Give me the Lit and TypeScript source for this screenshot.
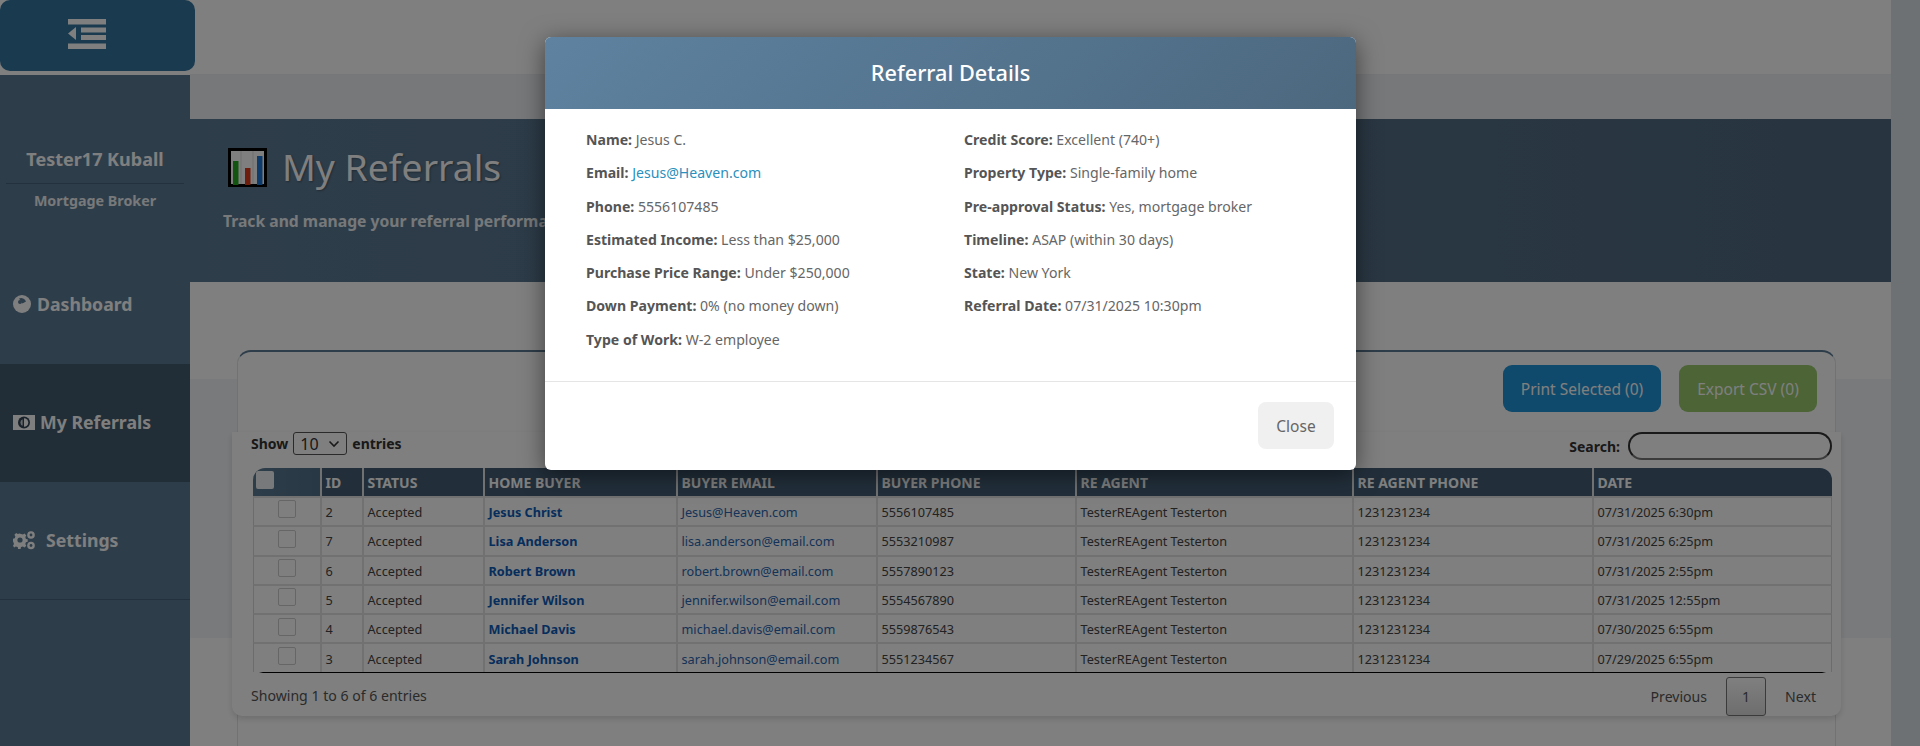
import { LitElement, html, css, svg } from "lit";
import { customElement } from "lit/decorators.js";

const rows = [
  ["2", "Jesus Christ", "Jesus@Heaven.com", "5556107485", "07/31/2025 6:30pm"],
  ["7", "Lisa Anderson", "lisa.anderson@email.com", "5553210987", "07/31/2025 6:25pm"],
  ["6", "Robert Brown", "robert.brown@email.com", "5557890123", "07/31/2025 2:55pm"],
  ["5", "Jennifer Wilson", "jennifer.wilson@email.com", "5554567890", "07/31/2025 12:55pm"],
  ["4", "Michael Davis", "michael.davis@email.com", "5559876543", "07/30/2025 6:55pm"],
  ["3", "Sarah Johnson", "sarah.johnson@email.com", "5551234567", "07/29/2025 6:55pm"],
];
const heads = ["ID", "Status", "Home Buyer", "Buyer Email", "Buyer Phone", "RE Agent", "RE Agent Phone", "Date"];
const widths = [69, 42, 121, 193, 200, 199, 277, 240, 238];

const left: [string, unknown][] = [
  ["Name:", "Jesus C."],
  ["Email:", html`<a class="mail">Jesus@Heaven.com</a>`],
  ["Phone:", "5556107485"],
  ["Estimated Income:", "Less than $25,000"],
  ["Purchase Price Range:", "Under $250,000"],
  ["Down Payment:", "0% (no money down)"],
  ["Type of Work:", "W-2 employee"],
];
const right: [string, unknown][] = [
  ["Credit Score:", "Excellent (740+)"],
  ["Property Type:", "Single-family home"],
  ["Pre-approval Status:", "Yes, mortgage broker"],
  ["Timeline:", "ASAP (within 30 days)"],
  ["State:", "New York"],
  ["Referral Date:", "07/31/2025 10:30pm"],
];

const menuIcon = svg`<svg class="menu-icon" viewBox="0 0 38 30" fill="#fff"><rect x="0" y="0" width="38" height="5.5"/><rect x="13" y="8.5" width="25" height="5"/><rect x="13" y="16" width="25" height="5"/><rect x="0" y="24.5" width="38" height="5.5"/><path d="M8 8v13L0 14.5z"/></svg>`;
const gauge = svg`<svg class="ico" width="18" height="18" viewBox="0 0 18 18"><circle cx="9" cy="9" r="9" fill="#fff"/><path d="M6 3.5 L9.5 8.5 L13 6.5 A5 5 0 0 0 6 3.5z" fill="#5c7b94"/><circle cx="7" cy="7" r="2" fill="#5c7b94"/></svg>`;
const money = svg`<svg class="ico" width="22" height="15" viewBox="0 0 22 15"><rect width="22" height="15" fill="#fff"/><circle cx="11" cy="7.5" r="6" fill="#344656"/><path d="M11 3.200a4.300 4.300 0 0 1 0 8.600z" fill="#fff"/><path d="M9.600 4.200a3.600 3.600 0 0 0 0 6.600z" fill="#fff" opacity=".75"/></svg>`;
const cogs = svg`<svg class="ico" width="22" height="20" viewBox="0 0 22 20" fill="#fff"><path d="M8 4l2 .6 1.500-1 1.800 1.800-1 1.600.6 1.900 1.800.4v2.500l-1.800.4-.6 1.900 1 1.600-1.800 1.800-1.600-1-1.900.6-.4 1.800H5.100l-.4-1.800-1.900-.6-1.600 1-1.200-1.800 1-1.600-.6-1.900L0 11.200V8.700l1.800-.4.6-1.900-1-1.600L3.200 3l1.600 1 1.900-.6z"/><circle cx="7" cy="10" r="2.600" fill="#5c7b94"/><circle cx="18" cy="5" r="3.800"/><circle cx="18" cy="5" r="1.400" fill="#5c7b94"/><circle cx="18" cy="15.500" r="3.800"/><circle cx="18" cy="15.500" r="1.400" fill="#5c7b94"/></svg>`;
const chart = svg`<svg class="chart" viewBox="0 0 39 39"><rect x="1.500" y="1.500" width="36" height="36" fill="#fff" stroke="#000" stroke-width="3"/><path d="M13 3v33M25 3v33" stroke="#ddd" stroke-width="1"/><rect x="5" y="13" width="5.500" height="24" fill="#22aa22"/><rect x="17" y="20" width="5.500" height="17" fill="#dd3b1a"/><rect x="29" y="8" width="5.500" height="29" fill="#1a78d8"/></svg>`;

@customElement("app-root")
export class AppRoot extends LitElement {
  static styles = css`
    :host { display: block; width: 1920px; height: 746px; overflow: hidden; position: relative; background: #fff;
      font-family: "Noto Sans", "Open Sans", sans-serif; color: #444; }
    .page { display: grid; grid-template-columns: 190px 1fr 29px; height: 746px; }
    .toggle { position: absolute; left: 0; top: 0; width: 195px; height: 71px; border-radius: 10px; background: #34749f; display: flex; padding: 19px 0 0 68px; box-sizing: border-box; }
    .menu-icon { width: 38px; height: 30px; }
    .side { margin-top: 75px; background: #5c7b94; color: #fff; font-weight: 700; display: flex; flex-direction: column; }
    .profile { height: 171px; box-sizing: border-box; padding-top: 71px; text-align: center; }
    .name { font-size: 18px; line-height: 26px; padding-bottom: 11px; margin: 0 6px; border-bottom: 1px solid #45627a; }
    .role { font-size: 14.300px; line-height: 20px; margin-top: 7px; opacity: .9; }
    .nav { height: 118px; box-sizing: border-box; display: flex; align-items: center; padding: 0 0 2px 13px; font-size: 17.700px; gap: 6px; }
    .nav.active { background: #425a6e; gap: 5px; }
    .nav.last { border-bottom: 1px solid #45627a; gap: 11px; }
    .ico { flex: none; }
    .main { display: flex; flex-direction: column; min-width: 0; background: #eef1f4; }
    .top { height: 74px; background: #fff; border-bottom: 1px solid #eceef0; margin-bottom: 44px; flex: none; }
    .banner { height: 163px; background: linear-gradient(90deg, #5c7b94, #506a80); flex: none; box-sizing: border-box; padding: 27px 34px 0; color: #fff; }
    .title { display: flex; align-items: center; gap: 15px; margin-left: 4px; }
    .chart { width: 39px; height: 39px; margin-top: 2px; }
    h1 { margin: 0; font-size: 37.300px; line-height: 40px; font-weight: 400; text-shadow: 1px 1px 2px rgba(0,0,0,.3); }
    .sub { font-size: 15.700px; line-height: 22px; font-weight: 700; margin: 23px 0 0 -1px; white-space: nowrap; opacity: .9; }
    .content { flex: 1; background: linear-gradient(#fff 97px, #f2f5f8 97px, #f2f5f8 356px, #fff 356px); padding: 68px 55px 0 47px; min-height: 0; }
    .card { height: 100%; box-sizing: border-box; border: 1px solid #e2e4e6; border-top: 2px solid #5c7b94; border-bottom: 0; border-radius: 14px 14px 0 0; padding-top: 13px; background: #fff; }
    .tools { display: flex; justify-content: flex-end; gap: 18px; padding-right: 18px; height: 47px; }
    .btn { border-radius: 9px; color: #fff; font-size: 15.500px; display: flex; align-items: center; justify-content: center; }
    .print { width: 158px; background: #1f94d8; }
    .csv { width: 138px; background: #98c86c; }
    .panel { margin: 20px -6px 0; height: 284px; box-sizing: border-box; border-radius: 0 0 10px 10px; background: #fff; box-shadow: 0 3px 6px rgba(0,0,0,.14); padding: 0 9px 0 19px; color: #444; }
    .lenrow { display: flex; justify-content: space-between; height: 28px; font-size: 14px; font-weight: 700; align-items: center; color: #333; }
    .show { display: flex; align-items: center; gap: 5px; margin-top: -5px; }
    .sel { width: 54px; height: 23px; box-sizing: border-box; border: 1px solid #555; border-radius: 3px; font-weight: 400; font-size: 16px; display: flex; align-items: center; justify-content: space-between; padding: 0 6px; background: #fff; }
    .search { display: flex; align-items: center; gap: 8px; }
    .input { width: 204px; height: 28px; box-sizing: border-box; border: 2px solid #333; border-bottom-color: #777; border-radius: 14px; }
    table { table-layout: fixed; border-collapse: separate; border-spacing: 0; width: 1579px; margin-top: 8px; margin-left: 1.500px; font-size: 12.700px; border-bottom: 1px solid #000; border-radius: 0 0 10px 10px; }
    th { height: 28px; background: #445f76; color: #fff; text-transform: uppercase; text-align: left; font-size: 14px; font-weight: 700; padding: 0 4px; border-right: 2px solid #e2e2e2; white-space: nowrap; overflow: hidden; box-sizing: border-box; }
    th.grad1 { background: linear-gradient(90deg, #5c7b94, #50708a); }
    th:first-child { border-top-left-radius: 12px; position: relative; }
    th:last-child { border-top-right-radius: 12px; border-right: 0; }
    td { height: 29.300px; padding: 1px 4px 0; border-top: 2px solid #e2e2e2; border-right: 2px solid #e2e2e2; box-sizing: border-box; white-space: nowrap; overflow: hidden; background: #fff; }
    td:first-child { border-left: 1px solid #d8d8d8; text-align: center; padding: 0 0 6px 0; }
    td:last-child { border-right: 1px solid #d8d8d8; }
    .cb { display: inline-block; width: 18px; height: 18px; border: 1px solid #ccc; border-radius: 2px; background: #fff; vertical-align: middle; box-sizing: border-box; }
    .cbh { position: absolute; left: 3px; top: 3px; width: 18px; height: 18px; background: #fff; border-radius: 2px; opacity: .9; }
    .buyer { color: #0d5cb8; font-weight: 700; }
    .em { color: #2a66b0; }
    .foot { display: flex; justify-content: space-between; align-items: center; margin-top: 4px; font-size: 14.100px; color: #555; }
    .foot > span { margin-top: -2px; }
    .pager { display: flex; align-items: center; gap: 19px; padding-right: 16px; }
    .pg { width: 40px; height: 39px; box-sizing: border-box; border: 1px solid #777; border-radius: 3px; background: linear-gradient(#fff, #dcdcdc); display: flex; align-items: center; justify-content: center; }
    .strip { background: #dde2e7; }
    .overlay { position: absolute; inset: 0; background: rgba(0,0,0,.5); display: flex; justify-content: center; padding: 37px 19px 0 0; box-sizing: border-box; align-items: flex-start; }
    .modal { width: 811px; height: 433px; background: #fff; border-radius: 6px; box-shadow: 0 5px 25px rgba(0,0,0,.5); display: flex; flex-direction: column; overflow: hidden; }
    .mh { height: 72px; flex: none; background: linear-gradient(135deg, #5e82a0, #4c687f); color: #fff; font-size: 21.700px; display: flex; align-items: center; justify-content: center; font-weight: 500; padding-bottom: 1px; box-sizing: border-box; }
    .mb { display: grid; grid-template-columns: 378px 1fr; padding: 21px 41px 31px; height: 273px; box-sizing: border-box; border-bottom: 1px solid #e5e5e5; font-size: 14.100px; color: #666; }
    .mb p { margin: 0 0 13.300px; line-height: 20px; white-space: nowrap; }
    .mb b { color: #555; font-weight: 700; }
    .mail { color: #2a8fbd; }
    .mf { flex: 1; display: flex; justify-content: flex-end; padding: 20px 22px 0 0; }
    .close { width: 76px; height: 47px; background: #f0f0f0; border-radius: 8px; font-size: 15.500px; color: #666; display: flex; align-items: center; justify-content: center; }
  `;

  render() {
    return html`
      <div class="page">
        <aside class="side">
          <div class="profile">
            <div class="name">Tester17 Kuball</div>
            <div class="role">Mortgage Broker</div>
          </div>
          <div class="nav">${gauge}<span>Dashboard</span></div>
          <div class="nav active">${money}<span>My Referrals</span></div>
          <div class="nav last">${cogs}<span>Settings</span></div>
        </aside>
        <main class="main">
          <div class="top"></div>
          <section class="banner">
            <div class="title">${chart}<h1>My Referrals</h1></div>
            <p class="sub">Track and manage your referral performance</p>
          </section>
          <section class="content">
            <div class="card">
              <div class="tools">
                <div class="btn print">Print Selected (0)</div>
                <div class="btn csv">Export CSV (0)</div>
              </div>
              <div class="panel">
                <div class="lenrow">
                  <div class="show">Show <span class="sel">10 <svg width="12" height="8" viewBox="0 0 12 8"><path d="M1.500 1.500 6 6l4.500-4.500" fill="none" stroke="#333" stroke-width="1.600"/></svg></span> entries</div>
                  <div class="search">Search: <span class="input"></span></div>
                </div>
                <table>
                  <colgroup>${widths.map((w) => html`<col style="width:${w}px" />`)}</colgroup>
                  <thead>
                    <tr>
                      <th class="grad1"><span class="cbh"></span></th>
                      ${heads.map((h) => html`<th>${h}</th>`)}
                    </tr>
                  </thead>
                  <tbody>
                    ${rows.map((r) => html`<tr>
                      <td><span class="cb"></span></td>
                      <td>${r[0]}</td>
                      <td>Accepted</td>
                      <td class="buyer">${r[1]}</td>
                      <td class="em">${r[2]}</td>
                      <td>${r[3]}</td>
                      <td>TesterREAgent Testerton</td>
                      <td>1231231234</td>
                      <td>${r[4]}</td>
                    </tr>`)}
                  </tbody>
                </table>
                <div class="foot">
                  <span>Showing 1 to 6 of 6 entries</span>
                  <div class="pager"><span>Previous</span><span class="pg">1</span><span>Next</span></div>
                </div>
              </div>
            </div>
          </section>
        </main>
        <div class="strip"></div>
      </div>
      <div class="toggle">${menuIcon}</div>
      <div class="overlay">
        <div class="modal">
          <div class="mh">Referral Details</div>
          <div class="mb">
            <div>${left.map(([k, v]) => html`<p><b>${k}</b> ${v}</p>`)}</div>
            <div>${right.map(([k, v]) => html`<p><b>${k}</b> ${v}</p>`)}</div>
          </div>
          <div class="mf"><div class="close">Close</div></div>
        </div>
      </div>
    `;
  }
}
